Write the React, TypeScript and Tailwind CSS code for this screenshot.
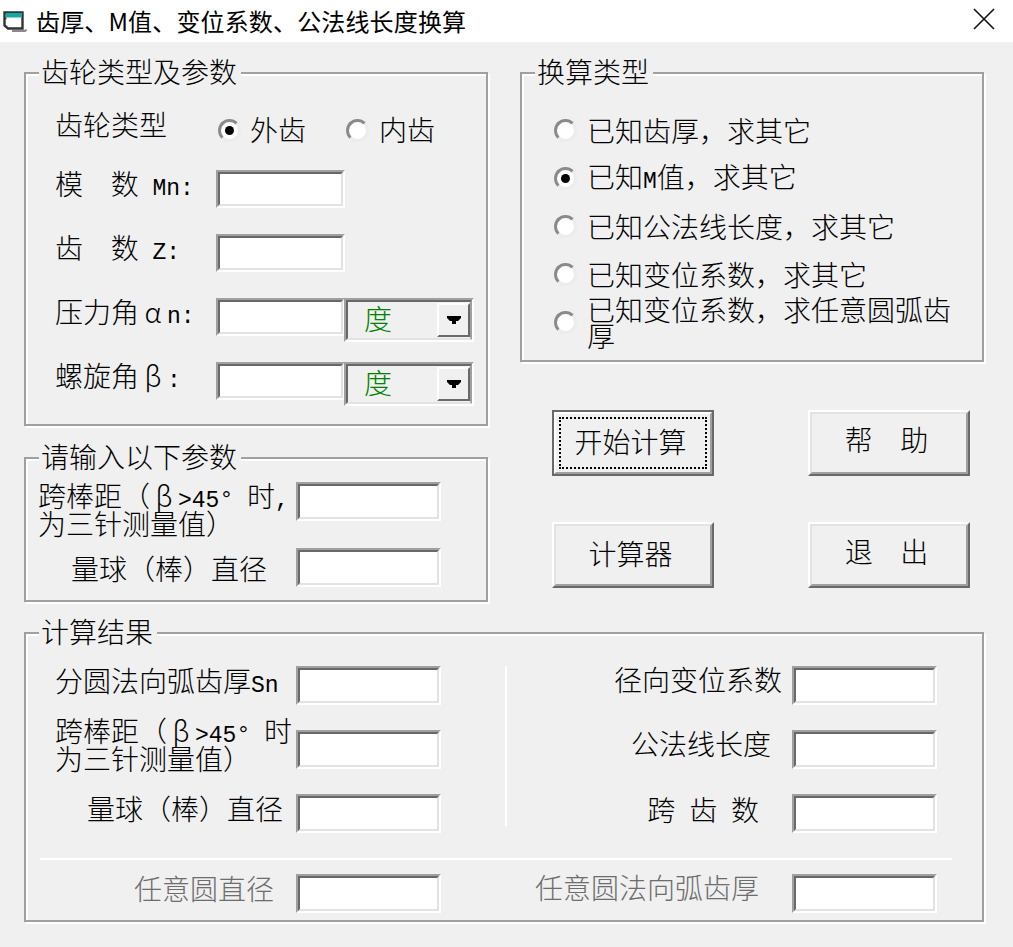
import React from 'react'

const Lat = ({ children }: { children: React.ReactNode }) => (
  <span className="font-['Liberation_Mono'] text-[23px] leading-none whitespace-pre">{children}</span>
)

const Full = ({ children }: { children: React.ReactNode }) => (
  <span className="inline-block w-7 text-center">{children}</span>
)

function Sunken({ className, children }: { className: string; children?: React.ReactNode }) {
  return (
    <div className={`border-2 border-t-[#a0a0a0] border-l-[#a0a0a0] border-r-white border-b-white shrink-0 ${className}`}>
      <div className="w-full h-full border-2 border-t-[#696969] border-l-[#696969] border-r-[#e3e3e3] border-b-[#e3e3e3] bg-white">
        {children}
      </div>
    </div>
  )
}

const Input = ({ wide }: { wide?: boolean }) => <Sunken className={wide ? 'w-[145px] h-[39px]' : 'w-[129px] h-[38px]'} />

function Combo() {
  return (
    <div className="w-[130px] h-[44px] -ml-[1px] shrink-0 border-2 border-t-[#a0a0a0] border-l-[#a0a0a0] border-r-white border-b-white">
      <div className="w-full h-full border-2 border-t-[#696969] border-l-[#696969] border-r-[#a0a0a0] border-b-[#e3e3e3] bg-[#f0f0f0] flex items-center pl-[16px] pr-0">
        <span className="text-[#008000] flex-1 -mt-[4px]">度</span>
        <div className="w-[33px] h-[34px] border-2 border-t-white border-l-white border-r-[#696969] border-b-[#696969] flex items-center justify-center">
          <svg width="14" height="8" viewBox="0 0 14 8"><polygon points="0,0 14,0 14,2 11,5 9,5 9,8 5,8 5,5 3,5 0,2" fill="#000" /></svg>
        </div>
      </div>
    </div>
  )
}

function Radio({ on }: { on?: boolean }) {
  return (
    <span className="w-[23px] h-[23px] shrink-0 rounded-full border-[3px] border-t-[#8a8a8a] border-l-[#8a8a8a] border-r-[#ececec] border-b-[#ececec] bg-white flex items-center justify-center">
      {on && <span className="w-[9px] h-[9px] rounded-full bg-black" />}
    </span>
  )
}

function Group({ title, className, children }: { title: string; className: string; children: React.ReactNode }) {
  return (
    <div className={`relative border-2 border-[#a0a0a0] shadow-[inset_2px_2px_0_#fff,2px_2px_0_#fff] ${className}`}>
      <div className="absolute left-[13px] top-[-19px] pl-[2px] pr-[4px] bg-[#f0f0f0] leading-[32px]">{title}</div>
      {children}
    </div>
  )
}

function Btn({ label, primary, className }: { label: React.ReactNode; primary?: boolean; className?: string }) {
  return (
    <div className={`w-[162px] h-[66px] border-2 ${primary ? 'border-[#696969]' : 'border-t-white border-l-white border-r-[#696969] border-b-[#696969]'} ${className ?? ''}`}>
      <div className={`w-full h-full border-2 ${primary ? 'border-t-white border-l-white border-r-[#a0a0a0] border-b-[#a0a0a0] p-[3px]' : 'border-t-[#e3e3e3] border-l-[#e3e3e3] border-r-[#a0a0a0] border-b-[#a0a0a0]'}`}>
        <div className={`w-full h-full flex items-center justify-center pr-[5px] pb-[4px] ${primary ? 'border-2 border-dotted border-black' : ''}`}>{label}</div>
      </div>
    </div>
  )
}

const typeRows: { on?: boolean; text: React.ReactNode }[] = [
  { text: '已知齿厚，求其它' },
  { on: true, text: <>已知<Lat>M</Lat>值，求其它</> },
  { text: '已知公法线长度，求其它' },
  { text: '已知变位系数，求其它' },
]

export default function App() {
  return (
    <div className="w-[1013px] h-[947px] bg-[#f0f0f0] text-black text-[28px] leading-[28px] font-light font-['Noto_Sans_CJK_SC',sans-serif] overflow-hidden">
      {/* title bar */}
      <div className="h-[42px] bg-white flex items-center pl-[2px] pr-[18px]">
        <svg width="26" height="24" viewBox="0 0 26 24" className="shrink-0 -mt-[1px]">
          <path d="M10 22h13l1.500-1.500" fill="none" stroke="#8a8a8a" strokeWidth="2" />
          <path d="M2.500 3.500h18v16H6l-3.500-3z" fill="#fff" stroke="#333" strokeWidth="2.400" />
          <path d="M4 4h16v4.500H4z" fill="#12a9a5" />
          <path d="M2.500 9.500h2M20 9.500h1" stroke="#333" strokeWidth="1.500" />
        </svg>
        <span className="ml-[8px] -mt-[1px] text-[24px] font-normal tracking-[0.15px]">齿厚、M值、变位系数、公法线长度换算</span>
        <svg width="22" height="22" viewBox="0 0 22 22" className="ml-auto -mt-[4px]">
          <path d="M1 1l20 20M21 1L1 21" stroke="#111" strokeWidth="1.600" />
        </svg>
      </div>

      <div className="w-[960px] ml-[24px] pt-[30px]">
        <div className="flex gap-[32px]">
          {/* left column */}
          <div className="w-[464px] shrink-0">
            <Group title="齿轮类型及参数" className="h-[354px] pl-[29px] pt-[34px]">
              <div className="flex h-[44px] items-center">
                <span className="w-[163px] -mt-[12px]">齿轮类型</span>
                <Radio on />
                <span className="ml-[9px] w-[96px] -mt-[2px]">外齿</span>
                <Radio />
                <span className="ml-[10px] -mt-[2px]">内齿</span>
              </div>
              <div className="flex items-center h-[38px] mt-[18px]">
                <span className="w-[161px] -mt-[8px] whitespace-pre">模<Lat>  </Lat>数<Lat> Mn:</Lat></span>
                <Input />
              </div>
              <div className="flex items-center h-[38px] mt-[26px]">
                <span className="w-[161px] -mt-[8px] whitespace-pre">齿<Lat>  </Lat>数<Lat> Z:</Lat></span>
                <Input />
              </div>
              <div className="flex items-start h-[38px] mt-[26px]">
                <span className="w-[161px] -mt-[1px]">压力角<Full>α</Full><Lat>n:</Lat></span>
                <Input />
                <Combo />
              </div>
              <div className="flex items-start h-[38px] mt-[26px]">
                <span className="w-[161px] -mt-[1px]">螺旋角<Full>β</Full><Lat>:</Lat></span>
                <Input />
                <Combo />
              </div>
            </Group>

            <Group title="请输入以下参数" className="h-[145px] mt-[31px] pl-[12px] pt-[23px]">
              <div className="flex h-[56px]">
                <div className="w-[258px] whitespace-pre -mt-[1px]">
                  <div className="h-[28px]">跨棒距（<Full>β</Full><Lat>&gt;45° </Lat>时<Lat>,</Lat></div>
                  <div className="h-[28px]">为三针测量值）</div>
                </div>
                <Input wide />
              </div>
              <div className="flex items-center mt-[10px]">
                <span className="w-[258px] pl-[33px]">量球（棒）直径</span>
                <Input wide />
              </div>
            </Group>
          </div>

          {/* right column */}
          <div className="w-[464px] shrink-0">
            <Group title="换算类型" className="h-[290px] pl-[32px] pt-[32px]">
              {typeRows.map((r, i) => (
                <div key={i} className="flex items-center h-[48px]">
                  <Radio on={r.on} />
                  <span className="ml-[10px]">{r.text}</span>
                </div>
              ))}
              <div className="flex items-center h-[48px]">
                <Radio />
                <span className="ml-[10px] w-[370px] leading-[26px]">已知变位系数，求任意圆弧齿厚</span>
              </div>
            </Group>
            <div className="grid grid-cols-[162px_162px] gap-x-[94px] gap-y-[46px] pl-[32px] mt-[48px]">
              <Btn primary label="开始计算" />
              <Btn label={<span className="whitespace-pre">帮<Lat>  </Lat>助</span>} />
              <Btn label="计算器" />
              <Btn label={<span className="whitespace-pre">退<Lat>  </Lat>出</span>} />
            </div>
          </div>
        </div>

        {/* results */}
        <Group title="计算结果" className="h-[290px] mt-[30px] pt-[32px]">
          <div className="flex">
            <div className="w-[479px] shrink-0 flex flex-col gap-[25px] pl-[29px]">
              <div className="flex items-center h-[39px]">
                <span className="w-[241px] -mt-[8px]">分圆法向弧齿厚<Lat>Sn</Lat></span>
                <Input wide />
              </div>
              <div className="flex items-center h-[39px]">
                <div className="w-[241px] -mt-[12px] whitespace-pre">
                  <div className="h-[28px]">跨棒距（<Full>β</Full><Lat>&gt;45° </Lat>时</div>
                  <div className="h-[28px]">为三针测量值）</div>
                </div>
                <Input wide />
              </div>
              <div className="flex items-center h-[39px]">
                <span className="w-[241px] pl-[32px] -mt-[12px]">量球（棒）直径</span>
                <Input wide />
              </div>
            </div>
            <div className="w-[2px] h-[160px] bg-white shrink-0" />
            <div className="flex-1 flex flex-col gap-[25px] pr-[45px] items-end">
              <div className="flex items-center h-[39px]">
                <span className="mr-[10px] -mt-[14px]">径向变位系数</span>
                <Input wide />
              </div>
              <div className="flex items-center h-[39px]">
                <span className="mr-[21px] -mt-[14px]">公法线长度</span>
                <Input wide />
              </div>
              <div className="flex items-center h-[39px]">
                <span className="mr-[33px] whitespace-pre -mt-[6px]">跨<Lat> </Lat>齿<Lat> </Lat>数</span>
                <Input wide />
              </div>
            </div>
          </div>
          <div className="h-[2px] w-[912px] bg-white ml-[14px] mt-[25px]" />
          <div className="flex mt-[14px] text-[#6d6d6d]">
            <div className="w-[481px] shrink-0 flex justify-end items-center pr-[66px]">
              <span className="mr-[22px] -mt-[12px]">任意圆直径</span>
              <Input wide />
            </div>
            <div className="flex-1 flex justify-end items-center pr-[45px]">
              <span className="mr-[33px] -mt-[14px]">任意圆法向弧齿厚</span>
              <Input wide />
            </div>
          </div>
        </Group>
      </div>
    </div>
  )
}
